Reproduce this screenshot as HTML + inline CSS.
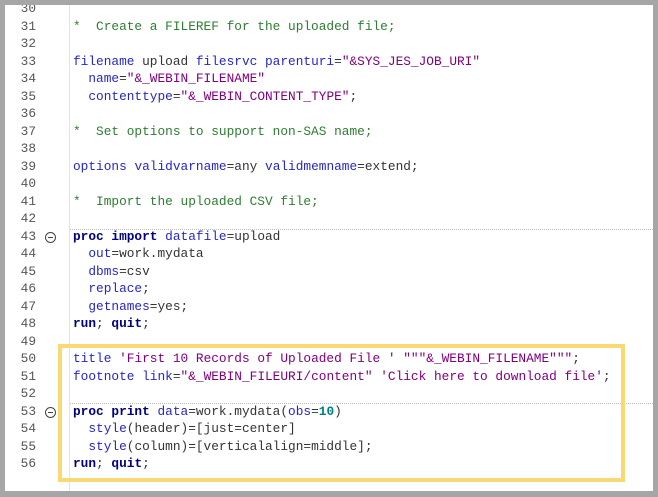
<!DOCTYPE html>
<html><head><style>
body{margin:0;width:658px;height:497px;background:#a6a6a6;position:relative;overflow:hidden}
#w{position:absolute;left:5px;top:5px;width:648px;height:486px;background:#fff;overflow:hidden}
.code{position:absolute;left:0;top:-5px;font-family:"Liberation Mono",monospace;font-size:12.8px;line-height:17.52px;white-space:pre;color:#333}
.ln{position:absolute;left:0;width:31px;text-align:right;color:#555}
.tx{position:absolute;left:68px}
.gut{position:absolute;left:64px;top:0;width:1px;height:486px;background:#e4e4e4}
.dot{position:absolute;left:65px;width:583px;border-top:1px dotted #bbb}
.f{position:absolute;left:40px;width:9px;height:9px;border:1px solid #444;border-radius:50%}
.f:after{content:"";position:absolute;left:2px;top:4px;width:5px;height:1px;background:#444}
.k{color:#000080;font-weight:bold}.b{color:#2626c8}.s{color:#800080}.c{color:#2e7d32}.n{color:#008080;font-weight:bold}
#y{position:absolute;left:53px;top:339px;width:559px;height:130px;border:4px solid #fbd972}
</style></head><body><div id="w">
<div class="gut"></div>
<div class="dot" style="top:224px"></div>
<div class="dot" style="top:398px"></div>
<div class="f" style="top:227px"></div>
<div class="f" style="top:402px"></div>
<div class="code">
<div class="ln" style="top:0">30
31
32
33
34
35
36
37
38
39
40
41
42
43
44
45
46
47
48
49
50
51
52
53
54
55
56</div>
<div class="tx" style="top:0">
<span class="c">*  Create a FILEREF for the uploaded file;</span>

<span class="b">filename</span> upload <span class="b">filesrvc</span> <span class="b">parenturi</span>=<span class="s">"&amp;SYS_JES_JOB_URI"</span>
  <span class="b">name</span>=<span class="s">"&amp;_WEBIN_FILENAME"</span>
  <span class="b">contenttype</span>=<span class="s">"&amp;_WEBIN_CONTENT_TYPE"</span>;

<span class="c">*  Set options to support non-SAS name;</span>

<span class="b">options</span> <span class="b">validvarname</span>=any <span class="b">validmemname</span>=extend;

<span class="c">*  Import the uploaded CSV file;</span>

<span class="k">proc import</span> <span class="b">datafile</span>=upload
  <span class="b">out</span>=work.mydata
  <span class="b">dbms</span>=csv
  <span class="b">replace</span>;
  <span class="b">getnames</span>=yes;
<span class="k">run</span>; <span class="k">quit</span>;

<span class="b">title</span> <span class="s">'First 10 Records of Uploaded File ' """&amp;_WEBIN_FILENAME"""</span>;
<span class="b">footnote</span> <span class="b">link</span>=<span class="s">"&amp;_WEBIN_FILEURI/content"</span> <span class="s">'Click here to download file'</span>;

<span class="k">proc print</span> <span class="b">data</span>=work.mydata(<span class="b">obs</span>=<span class="n">10</span>)
  <span class="b">style</span>(header)=[just=center]
  <span class="b">style</span>(column)=[verticalalign=middle];
<span class="k">run</span>; <span class="k">quit</span>;</div>
</div>
<div id="y"></div>
</div></body></html>
